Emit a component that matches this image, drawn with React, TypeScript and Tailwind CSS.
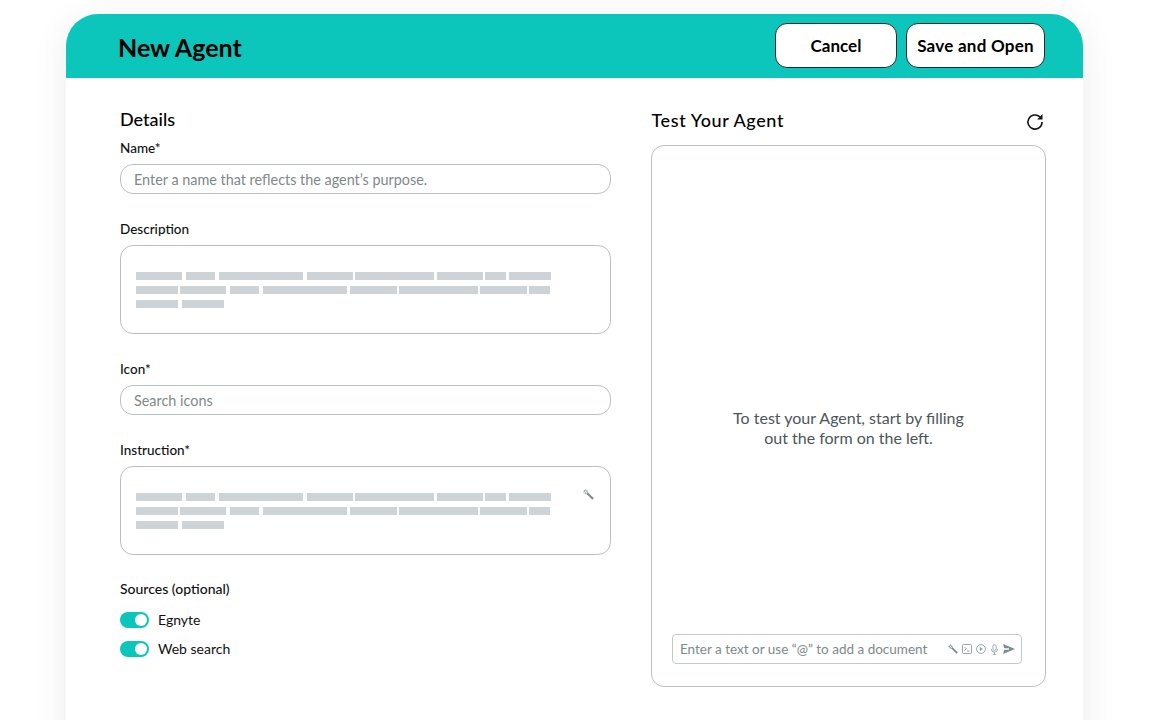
import { useState } from 'react';

const font = 'font-["Lato","Noto_Sans",sans-serif]';

function Bar({ className }: { className: string }) {
  return <div className={'h-2 bg-[#cdd3d6] ' + className} />;
}

// grey placeholder lines in place of the real text
function SkeletonText() {
  return (
    <div className="flex flex-col gap-1.5">
      <div className="flex">
        <Bar className="w-[46px]" />
        <Bar className="w-[29px] ml-[4px]" />
        <Bar className="w-[84px] ml-[4px]" />
        <Bar className="w-[46px] ml-[4px]" />
        <Bar className="w-[79px] ml-[2px]" />
        <Bar className="w-[46px] ml-[3px]" />
        <Bar className="w-[21px] ml-[2px]" />
        <Bar className="w-[42px] ml-[3px]" />
      </div>
      <div className="flex">
        <Bar className="w-[42px]" />
        <Bar className="w-[46px] ml-[2px]" />
        <Bar className="w-[29px] ml-[4px]" />
        <Bar className="w-[84px] ml-[4px]" />
        <Bar className="w-[47px] ml-[3px]" />
        <Bar className="w-[79px] ml-[2px]" />
        <Bar className="w-[47px] ml-[2px]" />
        <Bar className="w-[21px] ml-[2px]" />
      </div>
      <div className="flex">
        <Bar className="w-[42px]" />
        <Bar className="w-[42px] ml-[4px]" />
      </div>
    </div>
  );
}

function Wand({ className }: { className: string }) {
  return (
    <svg viewBox="0 0 12 12" className={className} fill="none">
      <path d="M4.4 4.4 11 11" stroke="#7f8b8f" strokeWidth="2.2" />
      <path d="M3 .4v2M3 3.6v2M.4 3h2M3.6 3h2M5 1 4 2M1 1l1 1M1 5l1-1" stroke="#8f9a9e" strokeWidth="1" />
    </svg>
  );
}

function Toggle({ label }: { label: string }) {
  const [on, setOn] = useState(true);
  return (
    <div className="flex items-center gap-[9px] h-[17px]">
      <button
        onClick={() => setOn(!on)}
        className={'w-[29px] h-4 rounded-full flex items-center px-[2px] ' + (on ? 'bg-[#0cc5bb] justify-end' : 'bg-gray-300')}
      >
        <span className="w-3 h-3 rounded-full bg-white" />
      </button>
      <span className="text-sm leading-none text-[#111]">{label}</span>
    </div>
  );
}

export default function App() {
  return (
    <div className={'h-[720px] overflow-hidden bg-white pt-[14px] px-[66px] ' + font}>
      <div className="w-[1017px] h-[780px] bg-white rounded-t-[32px] shadow-[0_6px_36px_rgba(0,0,0,0.08)]">
        {/* top bar */}
        <div className="h-16 bg-[#0cc5bb] rounded-t-[32px] flex items-center pl-[52px] pr-[38px]">
          <h1 className="text-[25px] font-bold text-black mt-[4px]">New Agent</h1>
          <div className="ml-auto flex gap-[9px] -mt-[1px]">
            <button className="w-[122px] h-[45px] bg-white border border-[#1c2b2a] rounded-xl text-[17px] font-bold text-black">Cancel</button>
            <button className="w-[139px] h-[45px] bg-white border border-[#1c2b2a] rounded-xl text-[17px] tracking-[0.25px] font-bold text-black">Save and Open</button>
          </div>
        </div>

        <div className="flex pl-[54px] pt-[29px]">
          {/* form */}
          <div className="w-[490.5px] flex flex-col">
            <h2 className="text-lg leading-6 font-medium text-black">Details</h2>
            <label className="mt-[7px] text-[13.5px] leading-5 font-medium text-[#111]">Name*</label>
            <div className="mt-[6px] h-[30px] border-[1.5px] border-[#b9c1c4] rounded-[13px] flex items-center px-[13px] pt-[2px] text-[14.4px] text-[#7f898c]">
              Enter a name that reflects the agent’s purpose.
            </div>
            <label className="mt-[25px] text-[13.5px] leading-5 font-medium text-[#111]">Description</label>
            <div className="mt-[6px] h-[89px] border-[1.5px] border-[#b9c1c4] rounded-[13px] pl-[15px] pt-[26px]">
              <SkeletonText />
            </div>
            <label className="mt-[25px] text-[13.5px] leading-5 font-medium text-[#111]">Icon*</label>
            <div className="mt-[6px] h-[30px] border-[1.5px] border-[#b9c1c4] rounded-[13px] flex items-center px-[13px] pt-[2px] text-[14.4px] text-[#7f898c]">
              Search icons
            </div>
            <label className="mt-[25px] text-[13.5px] leading-5 font-medium text-[#111]">Instruction*</label>
            <div className="mt-[6px] h-[89px] border-[1.5px] border-[#b9c1c4] rounded-[13px] pl-[15px] pt-[26px] relative">
              <SkeletonText />
              <Wand className="absolute right-[16px] top-[22px] w-[11px] h-[11px]" />
            </div>
            <label className="mt-[24px] text-sm leading-5 font-medium text-[#111]">Sources (optional)</label>
            <div className="mt-[12px] flex flex-col gap-3">
              <Toggle label="Egnyte" />
              <Toggle label="Web search" />
            </div>
          </div>

          {/* test panel */}
          <div className="ml-[40px] w-[395.5px] flex flex-col">
            <div className="flex items-center h-6 mt-[1px]">
              <h2 className="ml-[1px] text-lg leading-6 font-medium text-black tracking-[0.6px]">Test Your Agent</h2>
              <svg viewBox="0 0 24 24" className="ml-auto mr-[1px] mt-[3px] w-5 h-5" fill="none" stroke="#111" strokeWidth="1.9">
                <path d="M20.5 12a8.5 8.5 0 1 1-2.6-6.1" />
                <path d="M21 2.5v6.4h-6.4z" fill="#111" stroke="none" />
              </svg>
            </div>
            <div className="mt-[13px] h-[542px] border-[1.5px] border-[#b9c1c4] rounded-[13px] flex flex-col pl-[20.5px] pr-[23px] pb-[22px]">
              <div className="flex-1 flex items-center justify-center text-center text-base leading-5 text-[#4d5659] pt-[76px] pl-[3px]">
                <p>To test your Agent, start by filling<br />out the form on the left.</p>
              </div>
              <div className="h-[30px] border border-[#c4cbce] rounded-[4px] flex items-center pl-[7px] pr-[6px]">
                <span className="text-[13.5px] text-[#7f898c]">Enter a text or use “@” to add a document</span>
                <div className="ml-auto flex items-center gap-[4px]">
                  <Wand className="w-[10px] h-[10px]" />
                  <svg viewBox="0 0 10 10" className="w-[10px] h-[10px]" fill="none" stroke="#8f9a9e" strokeWidth=".9">
                    <rect x=".5" y=".5" width="9" height="9" rx="1" />
                    <path d="M2.5 3 4.3 4.8 2.5 6.5M5 7h2.5" />
                  </svg>
                  <svg viewBox="0 0 10 10" className="w-[10px] h-[10px]" fill="none" stroke="#8f9a9e" strokeWidth=".9">
                    <circle cx="5" cy="5" r="4.4" />
                    <path d="M3.8 3v4L6.8 5z" fill="#8f9a9e" stroke="none" />
                  </svg>
                  <svg viewBox="0 0 10 12" className="w-[9px] h-[11px]" fill="none" stroke="#8f9a9e" strokeWidth=".9">
                    <rect x="3.2" y=".6" width="3.6" height="6.6" rx="1.8" />
                    <path d="M1.4 5.4a3.6 3.6 0 0 0 7.2 0M5 9v2.4M3 11.5h4" />
                  </svg>
                  <svg viewBox="0 0 12 10" className="w-3 h-[10px]" fill="#7f8b8f">
                    <path d="M0 0 12 5 0 10 1.4 5.8H6V4.2H1.4z" />
                  </svg>
                </div>
              </div>
            </div>
          </div>
        </div>
      </div>
    </div>
  );
}
